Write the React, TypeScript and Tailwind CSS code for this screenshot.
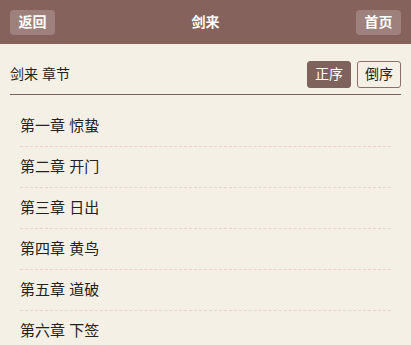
import { useState } from 'react';

const chapters = ['第一章 惊蛰', '第二章 开门', '第三章 日出', '第四章 黄鸟', '第五章 道破', '第六章 下签', '第七章 碎瓷'];

function App() {
  const [order, setOrder] = useState<'asc' | 'desc'>('asc');
  const list = order === 'asc' ? chapters : [...chapters].reverse();

  return (
    <div
      className="min-h-screen bg-[#f5f0e6] text-[#222]"
      style={{ fontFamily: '"Liberation Sans", "Noto Sans CJK SC", sans-serif' }}
    >
      {/* 头部 */}
      <div className="flex h-[44px] items-center justify-between bg-[#86625c] px-[10px]">
        <button type="button" className="h-[25px] w-[45px] rounded-[4px] bg-white/20 text-[14px] font-bold text-white">
          返回
        </button>
        <div className="text-[14px] font-bold text-white">剑来</div>
        <button type="button" className="h-[25px] w-[45px] rounded-[4px] bg-white/20 text-[14px] font-bold text-white">
          首页
        </button>
      </div>

      {/* 工具栏 */}
      <div className="mx-[10px] flex items-center justify-between border-b border-b-[#7a625d] pb-[6px] pt-[17px]">
        <span className="text-[14px]">剑来 章节</span>
        <div className="flex gap-[6px]">
          <button
            type="button"
            onClick={() => setOrder('asc')}
            className={`h-[27px] w-[44px] rounded-[3px] border text-[14px] ${order === 'asc' ? 'border-[#7e625c] bg-[#7e625c] text-white' : 'border-[#8b6f6a] text-[#222]'}`}
          >
            正序
          </button>
          <button
            type="button"
            onClick={() => setOrder('desc')}
            className={`h-[27px] w-[44px] rounded-[3px] border text-[14px] ${order === 'desc' ? 'border-[#7e625c] bg-[#7e625c] text-white' : 'border-[#8b6f6a] text-[#222]'}`}
          >
            倒序
          </button>
        </div>
      </div>

      {/* 章节列表 */}
      <ul className="mx-[20px] mt-[11px]">
        {list.map((title) => (
          <li key={title} className="border-b border-dashed border-b-[#efcfcc] py-[10px] text-[15px] leading-[20px]">
            {title}
          </li>
        ))}
      </ul>
    </div>
  );
}

export default App;
